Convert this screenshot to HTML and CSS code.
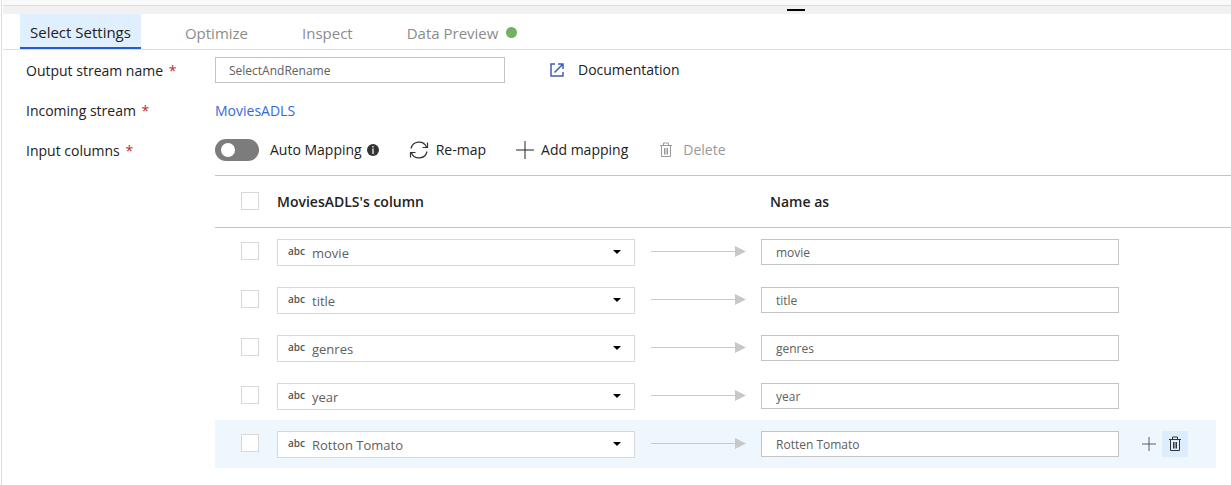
FILE: index.html
```html
<!DOCTYPE html>
<html lang="en">
<head>
<meta charset="utf-8">
<title>Select Settings</title>
<link rel="stylesheet" href="styles.css">
</head>
<body>
<svg class="sprite" aria-hidden="true">
  <symbol id="i-trash" viewBox="0 0 14 16"><path d="M1 3.500h12M4.500 3V1h5v2M2.500 3.500v11h9V3.500M5.500 6v6.500M7 6v6.500M8.500 6v6.500" fill="none" stroke="currentColor"/></symbol>
  <symbol id="i-plus" viewBox="0 0 18 18"><path d="M9 0v18M0 9h18" fill="none" stroke="currentColor"/></symbol>
  <symbol id="i-arrow" viewBox="0 0 95 12"><path d="M0 6.500h85" stroke="#c8c8c8"/><path d="M84 1l11 5.500L84 12z" fill="#c8c8c8"/></symbol>
</svg>
<div class="panel">
  <div class="top-strip"></div>
  <div class="splitter"><span class="grip"></span></div>
  <nav class="tabs" role="tablist">
    <button class="tab active" role="tab" aria-selected="true">Select Settings</button>
    <button class="tab" role="tab">Optimize</button>
    <button class="tab" role="tab">Inspect</button>
    <button class="tab" role="tab">Data Preview<span class="dot"></span></button>
  </nav>
  <main class="form">
    <div class="field">
      <label class="label" for="stream">Output stream name <span class="req">*</span></label>
      <div class="control">
        <input class="text stream" id="stream" value="SelectAndRename">
        <a class="doc" href="#">
          <svg width="14" height="14" viewBox="0 0 14 14" fill="none" stroke="#3f5fae" stroke-width="1.500"><path d="M5 1H1v12h12V9M8 1h5v5M13 1L4.500 9.500"/></svg>
          Documentation</a>
      </div>
    </div>
    <div class="field">
      <span class="label">Incoming stream <span class="req">*</span></span>
      <div class="control"><a class="link" href="#">MoviesADLS</a></div>
    </div>
    <div class="field">
      <span class="label">Input columns <span class="req">*</span></span>
      <div class="control toolbar">
        <input class="toggle" type="checkbox" role="switch" id="auto">
        <label class="auto" for="auto">Auto Mapping</label>
        <svg class="info" width="12" height="12" viewBox="0 0 12 12"><circle cx="6" cy="6" r="6" fill="#333"/><path d="M6 2v1.500M6 4.500V10" stroke="#ddd" stroke-width="1.500"/></svg>
        <button class="tool remap"><svg width="20" height="20" viewBox="0 0 20 20" fill="none" stroke="#333" stroke-width="1.200"><path d="M2 8.500A8.200 8.200 0 0 1 17.500 7M18.500 2.500v5h-5M18 11.500A8.200 8.200 0 0 1 2.500 13M1.500 17.500v-5h5"/></svg>Re-map</button>
        <button class="tool add"><svg width="18" height="18"><use href="#i-plus"/></svg>Add mapping</button>
        <button class="tool delete" disabled><svg width="14" height="16"><use href="#i-trash"/></svg>Delete</button>
      </div>
    </div>
    <table class="map">
      <colgroup><col class="c-check"><col><col class="c-arrow"><col><col class="c-actions"><col class="c-gutter"></colgroup>
      <thead>
        <tr><th><input class="check" type="checkbox" aria-label="Select all"></th><th>MoviesADLS's column</th><th></th><th class="name-head">Name as</th><th></th><th></th></tr>
      </thead>
      <tbody>
        <tr>
          <td><input class="check" type="checkbox" aria-label="Select movie"></td>
          <td><div class="source"><span class="type">abc</span><select aria-label="Source column"><option>movie</option></select><i class="caret"></i></div></td>
          <td><svg class="arrow" width="95" height="12"><use href="#i-arrow"/></svg></td>
          <td><input class="text" aria-label="Name as" value="movie"></td><td></td><td class="gutter"></td>
        </tr>
        <tr>
          <td><input class="check" type="checkbox" aria-label="Select title"></td>
          <td><div class="source"><span class="type">abc</span><select aria-label="Source column"><option>title</option></select><i class="caret"></i></div></td>
          <td><svg class="arrow" width="95" height="12"><use href="#i-arrow"/></svg></td>
          <td><input class="text" aria-label="Name as" value="title"></td><td></td><td class="gutter"></td>
        </tr>
        <tr>
          <td><input class="check" type="checkbox" aria-label="Select genres"></td>
          <td><div class="source"><span class="type">abc</span><select aria-label="Source column"><option>genres</option></select><i class="caret"></i></div></td>
          <td><svg class="arrow" width="95" height="12"><use href="#i-arrow"/></svg></td>
          <td><input class="text" aria-label="Name as" value="genres"></td><td></td><td class="gutter"></td>
        </tr>
        <tr>
          <td><input class="check" type="checkbox" aria-label="Select year"></td>
          <td><div class="source"><span class="type">abc</span><select aria-label="Source column"><option>year</option></select><i class="caret"></i></div></td>
          <td><svg class="arrow" width="95" height="12"><use href="#i-arrow"/></svg></td>
          <td><input class="text" aria-label="Name as" value="year"></td><td></td><td class="gutter"></td>
        </tr>
        <tr class="current">
          <td><input class="check" type="checkbox" aria-label="Select Rotton Tomato"></td>
          <td><div class="source"><span class="type">abc</span><select aria-label="Source column"><option>Rotton Tomato</option></select><i class="caret"></i></div></td>
          <td><svg class="arrow" width="95" height="12"><use href="#i-arrow"/></svg></td>
          <td><input class="text" aria-label="Name as" value="Rotten Tomato"></td>
          <td><div class="actions"><button class="icon-btn" aria-label="Add"><svg width="14" height="14"><use href="#i-plus"/></svg></button><button class="icon-btn hot" aria-label="Delete"><svg width="14" height="16"><use href="#i-trash"/></svg></button></div></td><td class="gutter"></td>
        </tr>
      </tbody>
    </table>
  </main>
</div>
</body>
</html>
```
FILE: styles.css
```css
* { box-sizing: border-box; }
body { margin: 0; background: #fff; color: #222; font: 14px/20px "Open Sans", "Noto Sans", sans-serif; }
button, input, select { font: inherit; color: inherit; margin: 0; }
button { border: 0; background: none; padding: 0; }
a { color: inherit; text-decoration: none; }
svg { flex: none; }
.sprite { position: absolute; width: 0; height: 0; }
.panel { min-height: 100vh; margin-left: 1px; border-left: 1px solid #ddd; padding-left: 1px; }
.top-strip { height: 6px; background: #f9f9f9; border-bottom: 1px solid #ddd; }
.splitter { display: flex; justify-content: center; height: 8px; padding: 3px 0 0 358px; background: #f1f1f1; }
.grip { width: 18px; height: 2px; background: #000; }
.tabs { display: flex; gap: 34px; padding-left: 17px; height: 36px; border-bottom: 1px solid #ddd; }
.tab { display: flex; align-items: center; padding: 2px 10px 0; color: #8c8c8c; font-size: 15px; }
.tab.active { color: #222; background: #dfeffe; border-bottom: 2px solid #2459dc; }
.dot { width: 11px; height: 11px; margin-left: 8px; border-radius: 50%; background: #74b060; }
.form { padding-top: 1px; }
.field { display: flex; align-items: center; height: 40px; padding-left: 23px; }
.label { width: 189px; flex: none; }
.req { color: #c4262e; margin-left: 2px; }
.control { display: flex; align-items: center; }
.toolbar { padding-bottom: 2px; }
.text { width: 100%; height: 26px; padding: 0 14px; border: 1px solid #c4c4c4; border-radius: 0; background: #fff; color: #606060; font-size: 12px; display: block; }
.stream { width: 290px; padding: 0 13px; margin-bottom: 2px; }
.doc { display: flex; align-items: center; gap: 14px; margin: 0 0 2px 45px; }
.link { color: #3568e0; }
.toggle { appearance: none; width: 44px; height: 22px; padding: 4px 6px; border-radius: 11px; background: #7c7c7c; }
.toggle::before { content: ""; display: block; width: 14px; height: 14px; border-radius: 50%; background: #fff; }
.auto { margin-left: 11px; }
.info { margin-left: 5px; }
.tool { display: flex; align-items: center; gap: 7px; }
.remap { margin-left: 30px; }
.add { margin-left: 30px; }
.delete { margin-left: 31px; gap: 10px; color: #999; }
.map { width: calc(100% - 212px); margin: 4px 0 0 212px; border-collapse: separate; border-spacing: 0; table-layout: fixed; }
.c-check { width: 62px; }
.c-arrow { width: 126px; }
.c-actions { width: 97px; }
.c-gutter { width: 15px; }
th, td { padding: 0; text-align: left; vertical-align: middle; }
th { height: 53px; border-top: 1px solid #c4c4c4; border-bottom: 1px solid #c4c4c4; font-weight: 600; }
.name-head { padding-left: 9px; }
td { height: 48px; }
.current td:not(.gutter) { background: #eef7fe; }
.check { appearance: none; display: block; width: 18px; height: 18px; margin: 0 0 2px 26px; border: 1px solid #d8d8d8; background: #fff; }
.source { display: flex; align-items: center; height: 27px; padding: 0 13px 0 10px; border: 1px solid #d8d8d8; background: #fff; color: #555; }
.type { font-size: 10px; font-weight: 600; line-height: 16px; margin-bottom: 3px; }
.source select { appearance: none; flex: 1; min-width: 0; border: 0; padding: 1px 0 0 7px; background: none; color: #606060; font-size: 13px; }
.caret { border: 4px solid transparent; border-top-color: #000; border-bottom: 0; }
.arrow { display: block; margin: 0 0 2px 16px; }
.actions { display: flex; align-items: center; padding-left: 17px; }
.icon-btn { display: flex; align-items: center; justify-content: center; width: 26px; height: 26px; color: #333; }
.hot { background: #dceefe; }
```
